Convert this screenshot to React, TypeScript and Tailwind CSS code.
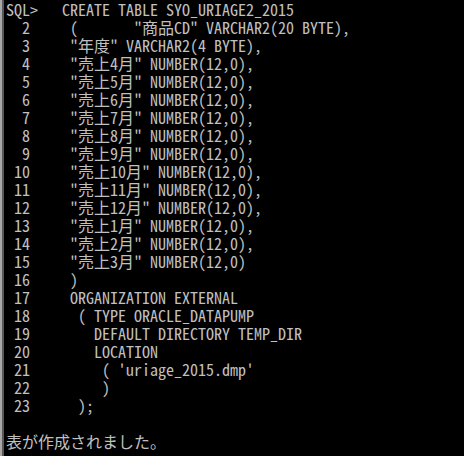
import React from 'react'

const lines = [
  'SQL>   CREATE TABLE SYO_URIAGE2_2015',
  '  2     (       "商品CD" VARCHAR2(20 BYTE),',
  '  3     "年度" VARCHAR2(4 BYTE),',
  '  4     "売上4月" NUMBER(12,0),',
  '  5     "売上5月" NUMBER(12,0),',
  '  6     "売上6月" NUMBER(12,0),',
  '  7     "売上7月" NUMBER(12,0),',
  '  8     "売上8月" NUMBER(12,0),',
  '  9     "売上9月" NUMBER(12,0),',
  ' 10     "売上10月" NUMBER(12,0),',
  ' 11     "売上11月" NUMBER(12,0),',
  ' 12     "売上12月" NUMBER(12,0),',
  ' 13     "売上1月" NUMBER(12,0),',
  ' 14     "売上2月" NUMBER(12,0),',
  ' 15     "売上3月" NUMBER(12,0)',
  ' 16     )',
  ' 17     ORGANIZATION EXTERNAL',
  ' 18      ( TYPE ORACLE_DATAPUMP',
  ' 19        DEFAULT DIRECTORY TEMP_DIR',
  ' 20        LOCATION',
  " 21         ( 'uriage_2015.dmp'",
  ' 22         )',
  ' 23      );',
  '',
  '表が作成されました。',
]

const App = () => {
  return (
    <div className="w-[464px] h-[456px] bg-black flex overflow-hidden">
      <div className="w-[2px] h-full shrink-0 bg-[#a8a8a8]" />
      <div className="w-[2px] h-full shrink-0 bg-[#585858]" />
      <pre
        className="flex-1 m-0 pl-[2px] text-[16px] leading-[18px] text-[#c0c0c0] whitespace-pre"
        style={{ fontFamily: '"Noto Sans Mono CJK JP", "Liberation Mono", "Noto Sans CJK JP", monospace' }}
      >
        {lines.map((line, i) => (
          <div key={i} className="h-[18px]">
            {line}
          </div>
        ))}
      </pre>
    </div>
  )
}

export default App
